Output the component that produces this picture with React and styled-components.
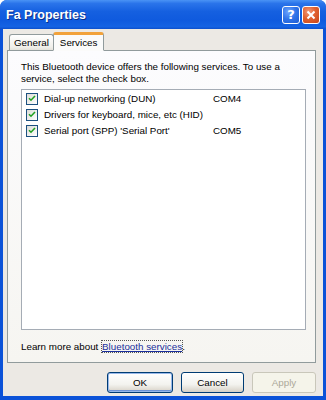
import React from 'react';
import styled, { createGlobalStyle } from 'styled-components';

const GlobalStyle = createGlobalStyle`
    html, body {
        margin: 0;
        padding: 0;
        background: #fff;
    }
    body {
        font-family: "Liberation Sans", Arial, sans-serif;
        font-size: 9.8px;
        color: #000;
    }
`;

const Window = styled.div`
    width: 326px;
    height: 400px;
    display: flex;
    flex-direction: column;
    border-radius: 7px 7px 0 0;
    overflow: hidden;
    background: #0b52d8;
`;

const TitleBar = styled.div`
    height: 29px;
    flex-shrink: 0;
    display: flex;
    align-items: center;
    padding: 0 6px 0 6px;
    gap: 2px;
    background: linear-gradient(#4a93f5 0%, #2a74ea 12%, #1560e0 40%, #0f5ade 70%, #1563e3 92%, #0d4fcc 100%);
`;

const Title = styled.div`
    flex: 1;
    color: #fff;
    font-family: "Liberation Sans", Arial, sans-serif;
    font-weight: bold;
    font-size: 12.5px;
    text-shadow: 1px 1px 0 #0a2f8a;
    padding-top: 1px;
`;

const CaptionButton = styled.div`
    width: 16px;
    height: 16px;
    border: 1px solid #fff;
    border-radius: 3px;
    display: flex;
    align-items: center;
    justify-content: center;
    color: #fff;
    font-family: "DejaVu Sans", sans-serif;
    font-weight: bold;
    font-size: 13px;
    background: ${p => p.$danger
        ? 'radial-gradient(circle at 35% 30%, #f39a7a 0%, #e1612f 45%, #c74418 100%)'
        : 'radial-gradient(circle at 35% 30%, #6ea6ff 0%, #2f73e8 50%, #1e5bd2 100%)'};
`;

const Body = styled.div`
    flex: 1;
    display: flex;
    flex-direction: column;
    margin: 0 3px 4px 3px;
    padding: 3px 7px 0 4px;
    background: #ece9e4;
`;

const TabStrip = styled.div`
    display: flex;
    align-items: flex-end;
    padding-left: 2px;
    height: 18px;
    position: relative;
    z-index: 1;
`;

const Tab = styled.div`
    display: flex;
    align-items: center;
    justify-content: center;
    box-sizing: border-box;
    height: ${p => (p.$active ? '19px' : '16px')};
    padding: 0 ${p => (p.$active ? '6px' : '4px')};
    border: 1px solid #919b9c;
    border-bottom: ${p => (p.$active ? '1px solid #fbfbfa' : 'none')};
    border-top: ${p => (p.$active ? '3px solid #f2a23a' : '1px solid #919b9c')};
    border-radius: 3px 3px 0 0;
    margin-bottom: ${p => (p.$active ? '-1px' : '0')};
    margin-left: ${p => (p.$active ? '-1px' : '0')};
    background: ${p => (p.$active ? '#fbfbfa' : 'linear-gradient(#fff, #f0efea 80%, #e4e2da)')};
    color: #000;
`;

const Panel = styled.div`
    height: 313px;
    box-sizing: border-box;
    border: 1px solid #919b9c;
    background: linear-gradient(#fcfcfe, #f6f5f1);
    padding: 10px 9px 0 13px;
    display: flex;
    flex-direction: column;
`;

const Intro = styled.p`
    margin: 0 0 4px 0;
    line-height: 12px;
    width: 262px;
`;

const ListBox = styled.div`
    height: 241px;
    box-sizing: border-box;
    border: 1px solid #a5acb5;
    background: #fff;
    padding: 3px 0 0 4px;
    display: flex;
    flex-direction: column;
    gap: 5px;
`;

const Row = styled.div`
    display: flex;
    align-items: center;
    height: 11px;
`;

const Check = styled.span`
    width: 10px;
    height: 10px;
    border: 1px solid #1c5180;
    background: linear-gradient(135deg, #dcdcd7, #fff);
    display: flex;
    align-items: center;
    justify-content: center;
    flex-shrink: 0;
    margin-right: 6px;
`;

const Name = styled.span`
    width: 169px;
    white-space: nowrap;
`;

const Port = styled.span``;

const Footer = styled.div`
    margin-top: 10px;
    line-height: 13px;
`;

const Link = styled.a`
    color: #1a2f9c;
    text-decoration: underline;
    outline: 1px dotted #555;
    outline-offset: 0;
    margin-left: 1px;
`;

const ButtonRow = styled.div`
    display: flex;
    justify-content: flex-end;
    gap: 8px;
    margin-top: 9px;
`;

const Button = styled.div`
    width: ${p => p.$w}px;
    height: 21px;
    box-sizing: border-box;
    border: 1px solid ${p => (p.$disabled ? '#c9c7ba' : '#003c74')};
    border-radius: 3px;
    display: flex;
    align-items: center;
    justify-content: center;
    color: ${p => (p.$disabled ? '#aca899' : '#000')};
    background: ${p => (p.$disabled ? '#f5f4ea' : 'linear-gradient(#ffffff, #f3f3ef 60%, #d6d0c5)')};
    box-shadow: ${p => (p.$default ? 'inset 0 0 0 1px #98b8ea, inset 0 -1px 0 1px #6d93d6' : 'none')};
`;

const CheckMark = () => (
    <svg width="8" height="7" viewBox="0 0 8 7">
        <path d="M1 3.2 L3 5.2 L7 1" fill="none" stroke="#21a121" strokeWidth="1.6" />
    </svg>
);

const services = [
    { name: 'Dial-up networking (DUN)', port: 'COM4' },
    { name: 'Drivers for keyboard, mice, etc (HID)', port: '' },
    { name: "Serial port (SPP) 'Serial Port'", port: 'COM5' },
];

export default function App() {
    return (
        <Window>
            <GlobalStyle />
            <TitleBar>
                <Title>Fa Properties</Title>
                <CaptionButton>?</CaptionButton>
                <CaptionButton $danger>
                    <svg width="10" height="10" viewBox="0 0 10 10">
                        <path d="M1.5 1.5 L8.5 8.5 M8.5 1.5 L1.5 8.5" stroke="#fff" strokeWidth="2" />
                    </svg>
                </CaptionButton>
            </TitleBar>
            <Body>
                <TabStrip>
                    <Tab>General</Tab>
                    <Tab $active>Services</Tab>
                </TabStrip>
                <Panel>
                    <Intro>
                        This Bluetooth device offers the following services. To use a service, select the check box.
                    </Intro>
                    <ListBox>
                        {services.map(s => (
                            <Row key={s.name}>
                                <Check><CheckMark /></Check>
                                <Name>{s.name}</Name>
                                <Port>{s.port}</Port>
                            </Row>
                        ))}
                    </ListBox>
                    <Footer>
                        Learn more about <Link>Bluetooth services</Link>.
                    </Footer>
                </Panel>
                <ButtonRow>
                    <Button $w={66} $default>OK</Button>
                    <Button $w={63}>Cancel</Button>
                    <Button $w={64} $disabled>Apply</Button>
                </ButtonRow>
            </Body>
        </Window>
    );
}
